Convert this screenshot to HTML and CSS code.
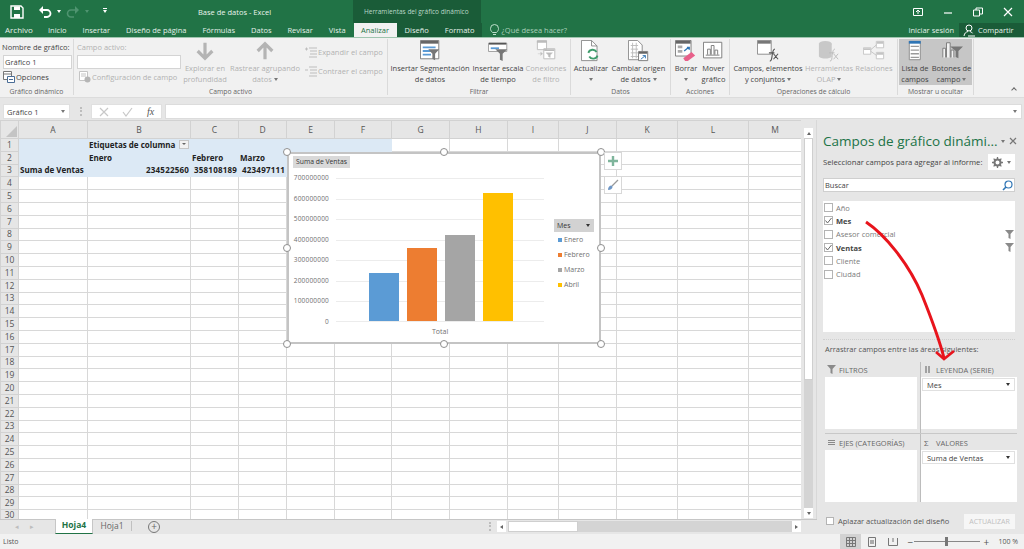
FILE: index.html
```html
<!doctype html>
<html lang="es">
    <head>
        <title>Base de datos - Excel</title>
        <link rel="stylesheet" href="styles.css">
    </head>
    <body>
        <div class="titlebar">
            <div class="qat">
                <svg width="14" height="14" viewBox="0 0 14 14" class="save"><path d="M1 1h10l2 2v10H1z" fill="none" stroke="#fff" stroke-width="1.4"/><path d="M4 1.500h6v3.500H4zM4 9h6v4H4z" fill="#fff"/></svg>
                <svg width="14" height="12" viewBox="0 0 14 12"><path d="M2 4h7a3.500 3.500 0 0 1 0 7H6" fill="none" stroke="#fff" stroke-width="1.800"/><path d="M5 0v8L1 4z" fill="#fff"/></svg>
                <span class="caret"></span>
                <svg width="14" height="12" viewBox="0 0 14 12"><path d="M12 4H5a3.500 3.500 0 0 0 0 7h3" fill="none" stroke="#4f9470" stroke-width="1.600"/><path d="M9 0v8l4-4z" fill="#4f9470"/></svg>
                <span class="caret dim"></span>
                <span class="caret lined"></span>
            </div>
            <div class="doc-title">Base de datos - Excel</div>
            <div class="tools-title">Herramientas del gráfico dinámico</div>
            <div class="win-buttons">
                <svg width="10" height="10" viewBox="0 0 10 10"><path d="M.5 1.500h9v7h-9z" fill="none" stroke="#fff"/><path d="M5 7V3M3 5l2-2 2 2" fill="none" stroke="#fff"/></svg>
                <svg width="10" height="10" viewBox="0 0 10 10"><path d="M1 6h8" stroke="#fff" stroke-width="1.200"/></svg>
                <svg width="10" height="10" viewBox="0 0 10 10"><path d="M.5 3h6v6h-6zM3 3V1h6.500v6H6.500" fill="none" stroke="#fff"/></svg>
                <svg width="10" height="10" viewBox="0 0 10 10"><path d="M1 1l8 8M9 1l-8 8" stroke="#fff" stroke-width="1.200"/></svg>
            </div>
        </div>

        <div class="tabs">
            <span class="tab first">Archivo</span>
            <span class="tab">Inicio</span>
            <span class="tab">Insertar</span>
            <span class="tab">Diseño de página</span>
            <span class="tab">Fórmulas</span>
            <span class="tab">Datos</span>
            <span class="tab">Revisar</span>
            <span class="tab">Vista</span>
            <span class="tab active">Analizar</span>
            <div class="tools-tabs">
                <span class="tab">Diseño</span>
                <span class="tab">Formato</span>
            </div>
            <span class="tell">
                <svg width="9" height="12" viewBox="0 0 9 12"><path d="M2.500 8.500C1 7 .5 6 .5 4.500a4 4 0 0 1 8 0c0 1.500-.5 2.500-2 4zM3 10.500h3" fill="none" stroke="#bfe0cd"/></svg>
                ¿Qué desea hacer?
            </span>
            <span class="login">Iniciar sesión</span>
            <span class="share">
                <svg width="13" height="13" viewBox="0 0 13 13"><circle cx="6" cy="4" r="3" fill="none" stroke="#fff"/><path d="M1 12c.5-3 2-4 4-4.500M7 7.500c1 .2 2 .8 2.500 1.800M5 12h7" fill="none" stroke="#fff"/></svg>
                Compartir
            </span>
        </div>

        <div class="ribbon">
            <div class="group g-name">
                <div class="group-body column">
                    <span class="small-label">Nombre de gráfico:</span>
                    <span class="name-box">Gráfico 1</span>
                    <span class="small-btn">
                        <svg width="12" height="12" viewBox="0 0 12 12"><path d="M.5.500h8v8h-8z" fill="#fff" stroke="#777"/><path d="M.5 3h8" stroke="#777"/><path d="M4.500 5.500h7v6h-7z" fill="#fff" stroke="#4a6d96"/><path d="M6 8.500h4" stroke="#4a6d96"/></svg>
                        Opciones
                    </span>
                </div>
                <div class="group-label">Gráfico dinámico</div>
            </div>

            <div class="group g-active">
                <div class="group-body">
                    <div class="column field-col">
                        <span class="small-label off">Campo activo:</span>
                        <span class="name-box wide"></span>
                        <span class="small-btn off">
                            <svg width="12" height="12" viewBox="0 0 12 12"><path d="M.5.500h8v9h-8z" fill="#fff" stroke="#c4c4c4"/><path d="M2 3h5M2 5h5" stroke="#c4c4c4"/><circle cx="8.500" cy="8.500" r="3" fill="#b5b5b5"/></svg>
                            Configuración de campo
                        </span>
                    </div>
                    <div class="big-btn off b-drill">
                        <svg width="24" height="24" viewBox="0 0 24 24"><path d="M12 3v17M4 12l8 8 8-8" fill="none" stroke="#b4b4b4" stroke-width="3.500"/></svg>
                        <span>Explorar en<br>profundidad</span>
                    </div>
                    <div class="big-btn off b-up">
                        <svg width="24" height="24" viewBox="0 0 24 24"><path d="M12 21V4M4 12l8-8 8 8" fill="none" stroke="#b4b4b4" stroke-width="3.500"/></svg>
                        <span>Rastrear agrupando<br>datos <b class="caret soft"></b></span>
                    </div>
                    <div class="column expand-col">
                        <span class="small-btn off">
                            <svg width="12" height="12" viewBox="0 0 12 12"><path d="M4 2h8M5 5h7M5 8h7M4 11h8M0 3h3M1.500 1.500v3" stroke="#bdbdbd"/></svg>
                            Expandir el campo
                        </span>
                        <span class="small-btn off">
                            <svg width="12" height="12" viewBox="0 0 12 12"><path d="M4 2h8M5 5h7M5 8h7M4 11h8M0 5h3" stroke="#bdbdbd"/></svg>
                            Contraer el campo
                        </span>
                    </div>
                </div>
                <div class="group-label">Campo activo</div>
            </div>

            <div class="group g-filter">
                <div class="group-body">
                    <div class="big-btn b-slicer">
                        <svg width="22" height="24" viewBox="0 0 22 24"><path d="M.5.500h20v20H.5z" fill="#fff" stroke="#777"/><path d="M1 1h19v3H1z" fill="#666"/><path d="M3 7h14v2H3zM3 11h9v2H3zM3 15h9v2H3z" fill="#5b9bd5"/><path d="M9 10h12l-4.500 5v7l-3-1.500V15z" fill="#777"/></svg>
                        <span>Insertar Segmentación<br>de datos</span>
                    </div>
                    <div class="big-btn b-time">
                        <svg width="22" height="24" viewBox="0 0 22 24"><path d="M.5 3.500h20v9H.5z" fill="#fff" stroke="#999"/><path d="M1 3h19v2H1z" fill="#555"/><path d="M3 8h9v2H3z" fill="#5b9bd5"/><path d="M8 10h13l-5 5v8l-3-1.500V15z" fill="#777"/></svg>
                        <span>Insertar escala<br>de tiempo</span>
                    </div>
                    <div class="big-btn off b-conn">
                        <svg width="22" height="24" viewBox="0 0 22 24"><path d="M1.500.500h10v10h-10zM8.500 9.500h12v11h-12z" fill="#fff" stroke="#bbb"/><path d="M9 10h11v2H9zM1 1h11v2H1z" fill="#bbb"/><path d="M11 14h7l-2.500 2.500V19L13.500 18v-1.500zM2 15h5M5 13l2 2-2 2" fill="#bbb" stroke="#bbb" stroke-width=".5"/></svg>
                        <span>Conexiones<br>de filtro</span>
                    </div>
                </div>
                <div class="group-label">Filtrar</div>
            </div>

            <div class="group g-data">
                <div class="group-body">
                    <div class="big-btn b-refresh">
                        <svg width="22" height="24" viewBox="0 0 22 24"><path d="M.5.500h11l6 6v16H.5z" fill="#fff" stroke="#888"/><path d="M11.500.500v6h6" fill="none" stroke="#888"/><path d="M8 14a5 5 0 0 1 9-1M18 17a5 5 0 0 1-9 1" fill="none" stroke="#3f9c6c" stroke-width="2"/></svg>
                        <span>Actualizar<br><b class="caret soft"></b></span>
                    </div>
                    <div class="big-btn b-source">
                        <svg width="22" height="24" viewBox="0 0 22 24"><path d="M.5.500h10l5 5v16H.5z" fill="#fff" stroke="#888"/><path d="M3 6h8M3 10h8M3 14h8M3 18h8M5 3v17M9 3v17" stroke="#bbb"/><path d="M11.500 12.500h10v10h-10z" fill="#fff" stroke="#777"/><path d="M12 13h9v2H12z" fill="#666"/><path d="M14 21l5-4M16 17h3v3" fill="none" stroke="#2f75b5"/></svg>
                        <span>Cambiar origen<br>de datos <b class="caret soft"></b></span>
                    </div>
                </div>
                <div class="group-label">Datos</div>
            </div>

            <div class="group g-actions">
                <div class="group-body">
                    <div class="big-btn b-clear">
                        <svg width="24" height="24" viewBox="0 0 24 24"><path d="M.5.500h17v17H.5z" fill="#fff" stroke="#777"/><path d="M1 1h16v3H1z" fill="#666"/><path d="M3 6h5v3H3zM3 11h5v3H3z" fill="#aaa"/><path d="M10 12l5-4M13 8h2.500v2.500" fill="none" stroke="#2f75b5" stroke-width="1.500"/><path d="M9 20l9-7 4 4-8 6h-3z" fill="#e8608a"/></svg>
                        <span>Borrar<br><b class="caret soft"></b></span>
                    </div>
                    <div class="big-btn b-move">
                        <svg width="24" height="24" viewBox="0 0 24 24"><path d="M.5 2.500h20v17H.5z" fill="#fff" stroke="#777"/><path d="M5 16V10h3v6M9 16V6h3v10M13 16v-5h3v5M3 16.500h15" fill="none" stroke="#777"/></svg>
                        <span>Mover<br>gráfico</span>
                    </div>
                </div>
                <div class="group-label">Acciones</div>
            </div>

            <div class="group g-calc">
                <div class="group-body">
                    <div class="big-btn b-sets">
                        <svg width="24" height="24" viewBox="0 0 24 24"><path d="M.5.500h15v15H.5z" fill="#fff" stroke="#888"/><path d="M1 1h14v3H1z" fill="#777"/><path d="M14 23c2 0 2-2 2.500-6s1-7 3-7M13 14h6M18 15l5 6M23 15l-5 6" fill="none" stroke="#555" stroke-width="1.200"/></svg>
                        <span>Campos, elementos<br>y conjuntos <b class="caret soft"></b></span>
                    </div>
                    <div class="big-btn off b-olap">
                        <svg width="24" height="24" viewBox="0 0 24 24"><ellipse cx="8" cy="4" rx="7" ry="3" fill="#c8c8c8"/><path d="M1 4v14c2 3 12 3 14 0V4z" fill="#c8c8c8"/><path d="M13 23c2 0 2-2 2.500-6s1-7 3-7M12 14h6M17 15l5 6M22 15l-5 6" fill="none" stroke="#bbb"/></svg>
                        <span>Herramientas<br>OLAP <b class="caret soft"></b></span>
                    </div>
                    <div class="big-btn off b-rel">
                        <svg width="24" height="24" viewBox="0 0 24 24"><path d="M.5 8.500h8v7h-8zM14.500 1.500h8v7h-8zM14.500 13.500h8v7h-8z" fill="#fff" stroke="#c4c4c4"/><path d="M1 9h7v2H1zM15 2h7v2h-7zM15 14h7v2h-7z" fill="#c4c4c4"/><path d="M8 11l7-6M8 12l7 5" stroke="#c4c4c4"/></svg>
                        <span>Relaciones</span>
                    </div>
                </div>
                <div class="group-label">Operaciones de cálculo</div>
            </div>

            <div class="group g-show">
                <div class="group-body">
                    <div class="big-btn pressed b-list">
                        <svg width="18" height="24" viewBox="0 0 18 24"><path d="M2.500 1.500h12v20h-12z" fill="#fff" stroke="#888"/><path d="M2 1h13v3H2z" fill="#2f75b5"/><path d="M4 7h9M4 11h9M4 15h9M4 19h9" stroke="#9a9a9a" stroke-width="1.500"/></svg>
                        <span>Lista de<br>campos</span>
                    </div>
                    <div class="big-btn pressed b-buttons">
                        <svg width="24" height="24" viewBox="0 0 24 24"><path d="M2 19V9h3v10M6 19V3h4v16M11 19v-8h3v8" fill="#f2f2f2" stroke="#777"/><path d="M10 7h14l-5 5v8l-3-1.500V12z" fill="#777"/></svg>
                        <span>Botones de<br>campo <b class="caret soft"></b></span>
                    </div>
                </div>
                <div class="group-label">Mostrar u ocultar</div>
            </div>
            <span class="collapse"></span>
        </div>

        <div class="formula-bar">
            <div class="name-field">Gráfico 1<span class="caret soft"></span></div>
            <span class="grip"></span>
            <div class="fx-box">
                <svg width="10" height="10" viewBox="0 0 10 10"><path d="M1 1l8 8M9 1l-8 8" stroke="#c8c8c8" stroke-width="1.200"/></svg>
                <svg width="11" height="10" viewBox="0 0 11 10"><path d="M1 5l3 4 6-8" fill="none" stroke="#c8c8c8" stroke-width="1.200"/></svg>
                <i>fx</i>
            </div>
            <div class="formula-input"><span class="caret soft"></span></div>
        </div>

        <div class="main">
            <div class="sheet-area">
                <div class="sheet-row">
                    <div class="grid-wrap">
                        <table class="grid">
                            <colgroup>
                                <col class="c0"><col class="c-a"><col class="c-b"><col class="c-c"><col class="c-d"><col class="c-e"><col class="c-f"><col class="c-g"><col class="c-h"><col class="c-i"><col class="c-j"><col class="c-k"><col class="c-l"><col class="c-m">
                            </colgroup>
                            <thead>
                                <tr>
                                    <th class="corner"><span class="corner-mark"></span></th>
                                    <th>A</th><th>B</th><th>C</th><th>D</th><th>E</th><th>F</th><th>G</th><th>H</th><th>I</th><th>J</th><th>K</th><th>L</th><th>M</th>
                                </tr>
                            </thead>
                            <tbody>
                                <tr><th>1</th><td class="pv"></td><td class="pv b">Etiquetas de columna<span class="filter-btn"></span></td><td class="pv"></td><td class="pv"></td><td class="pv"></td><td class="pv"></td><td></td><td></td><td></td><td></td><td></td><td></td><td></td></tr>
                                <tr><th>2</th><td class="pv"></td><td class="pv b">Enero</td><td class="pv b">Febrero</td><td class="pv b">Marzo</td><td class="pv"></td><td class="pv"></td><td></td><td></td><td></td><td></td><td></td><td></td><td></td></tr>
                                <tr><th>3</th><td class="pv b">Suma de Ventas</td><td class="pv b num">234522560</td><td class="pv b num">358108189</td><td class="pv b num">423497111</td><td class="pv"></td><td class="pv"></td><td></td><td></td><td></td><td></td><td></td><td></td><td></td></tr>
                                <tr><th>4</th><td></td><td></td><td></td><td></td><td></td><td></td><td></td><td></td><td></td><td></td><td></td><td></td><td></td></tr>
                                <tr><th>5</th><td></td><td></td><td></td><td></td><td></td><td></td><td></td><td></td><td></td><td></td><td></td><td></td><td></td></tr>
                                <tr><th>6</th><td></td><td></td><td></td><td></td><td></td><td></td><td></td><td></td><td></td><td></td><td></td><td></td><td></td></tr>
                                <tr><th>7</th><td></td><td></td><td></td><td></td><td></td><td></td><td></td><td></td><td></td><td></td><td></td><td></td><td></td></tr>
                                <tr><th>8</th><td></td><td></td><td></td><td></td><td></td><td></td><td></td><td></td><td></td><td></td><td></td><td></td><td></td></tr>
                                <tr><th>9</th><td></td><td></td><td></td><td></td><td></td><td></td><td></td><td></td><td></td><td></td><td></td><td></td><td></td></tr>
                                <tr><th>10</th><td></td><td></td><td></td><td></td><td></td><td></td><td></td><td></td><td></td><td></td><td></td><td></td><td></td></tr>
                                <tr><th>11</th><td></td><td></td><td></td><td></td><td></td><td></td><td></td><td></td><td></td><td></td><td></td><td></td><td></td></tr>
                                <tr><th>12</th><td></td><td></td><td></td><td></td><td></td><td></td><td></td><td></td><td></td><td></td><td></td><td></td><td></td></tr>
                                <tr><th>13</th><td></td><td></td><td></td><td></td><td></td><td></td><td></td><td></td><td></td><td></td><td></td><td></td><td></td></tr>
                                <tr><th>14</th><td></td><td></td><td></td><td></td><td></td><td></td><td></td><td></td><td></td><td></td><td></td><td></td><td></td></tr>
                                <tr><th>15</th><td></td><td></td><td></td><td></td><td></td><td></td><td></td><td></td><td></td><td></td><td></td><td></td><td></td></tr>
                                <tr><th>16</th><td></td><td></td><td></td><td></td><td></td><td></td><td></td><td></td><td></td><td></td><td></td><td></td><td></td></tr>
                                <tr><th>17</th><td></td><td></td><td></td><td></td><td></td><td></td><td></td><td></td><td></td><td></td><td></td><td></td><td></td></tr>
                                <tr><th>18</th><td></td><td></td><td></td><td></td><td></td><td></td><td></td><td></td><td></td><td></td><td></td><td></td><td></td></tr>
                                <tr><th>19</th><td></td><td></td><td></td><td></td><td></td><td></td><td></td><td></td><td></td><td></td><td></td><td></td><td></td></tr>
                                <tr><th>20</th><td></td><td></td><td></td><td></td><td></td><td></td><td></td><td></td><td></td><td></td><td></td><td></td><td></td></tr>
                                <tr><th>21</th><td></td><td></td><td></td><td></td><td></td><td></td><td></td><td></td><td></td><td></td><td></td><td></td><td></td></tr>
                                <tr><th>22</th><td></td><td></td><td></td><td></td><td></td><td></td><td></td><td></td><td></td><td></td><td></td><td></td><td></td></tr>
                                <tr><th>23</th><td></td><td></td><td></td><td></td><td></td><td></td><td></td><td></td><td></td><td></td><td></td><td></td><td></td></tr>
                                <tr><th>24</th><td></td><td></td><td></td><td></td><td></td><td></td><td></td><td></td><td></td><td></td><td></td><td></td><td></td></tr>
                                <tr><th>25</th><td></td><td></td><td></td><td></td><td></td><td></td><td></td><td></td><td></td><td></td><td></td><td></td><td></td></tr>
                                <tr><th>26</th><td></td><td></td><td></td><td></td><td></td><td></td><td></td><td></td><td></td><td></td><td></td><td></td><td></td></tr>
                                <tr><th>27</th><td></td><td></td><td></td><td></td><td></td><td></td><td></td><td></td><td></td><td></td><td></td><td></td><td></td></tr>
                                <tr><th>28</th><td></td><td></td><td></td><td></td><td></td><td></td><td></td><td></td><td></td><td></td><td></td><td></td><td></td></tr>
                                <tr><th>29</th><td></td><td></td><td></td><td></td><td></td><td></td><td></td><td></td><td></td><td></td><td></td><td></td><td></td></tr>
                                <tr class="last-row"><th>30</th><td></td><td></td><td></td><td></td><td></td><td></td><td></td><td></td><td></td><td></td><td></td><td></td><td></td></tr>
                            </tbody>
                        </table>

                        <!-- chart floats over the cells -->
                        <div class="chart">
                            <span class="handle h-tl"></span><span class="handle h-tc"></span><span class="handle h-tr"></span>
                            <span class="handle h-ml"></span><span class="handle h-mr"></span>
                            <span class="handle h-bl"></span><span class="handle h-bc"></span><span class="handle h-br"></span>
                            <div class="chart-field">Suma de Ventas</div>
                            <div class="plot">
                                <div class="y-axis">
                                    <span>700000000</span><span>600000000</span><span>500000000</span><span>400000000</span><span>300000000</span><span>200000000</span><span>100000000</span><span>0</span>
                                </div>
                                <div class="plot-area">
                                    <div class="bars">
                                        <div class="bar s-blue" style="height: 33.5%"></div>
                                        <div class="bar s-orange" style="height: 51.2%"></div>
                                        <div class="bar s-gray" style="height: 60.5%"></div>
                                        <div class="bar s-yellow" style="height: 89.6%"></div>
                                    </div>
                                </div>
                            </div>
                            <div class="x-label">Total</div>
                            <div class="legend">
                                <div class="legend-btn">Mes<span class="caret dark"></span></div>
                                <div class="legend-item"><i class="s-blue"></i>Enero</div>
                                <div class="legend-item"><i class="s-orange"></i>Febrero</div>
                                <div class="legend-item"><i class="s-gray"></i>Marzo</div>
                                <div class="legend-item"><i class="s-yellow"></i>Abril</div>
                            </div>
                        </div>
                        <div class="chart-tool t-plus">
                            <svg width="10" height="10" viewBox="0 0 10 10"><path d="M5 0v10M0 5h10" stroke="#7fb59c" stroke-width="2.400"/></svg>
                        </div>
                        <div class="chart-tool t-brush">
                            <svg width="12" height="12" viewBox="0 0 12 12"><path d="M11 1L5 7" stroke="#999" stroke-width="1.200"/><path d="M1 11c0-3 1.500-4.500 3.500-4.500l1 1C5.500 9.500 4 11 1 11z" fill="#6f97c6"/></svg>
                        </div>
                    </div>
                    <div class="v-scroll">
                        <span class="arrow-box"><span class="arrow up"></span></span>
                        <span class="thumb"></span>
                        <span class="track"></span>
                        <span class="arrow-box"><span class="arrow down"></span></span>
                    </div>
                </div>
                <div class="sheet-tabs">
                    <span class="nav">◂</span><span class="nav">▸</span>
                    <span class="sheet active">Hoja4</span>
                    <span class="sheet">Hoja1</span>
                    <span class="tab-sep"></span>
                    <span class="add-sheet">+</span>
                    <div class="h-scroll">
                        <span class="grip"></span>
                        <span class="h-arrow"><span class="arrow left"></span></span>
                        <span class="h-thumb"></span>
                        <span class="h-track"></span>
                        <span class="h-arrow"><span class="arrow right"></span></span>
                    </div>
                </div>
            </div>

            <aside class="panel">
                <div class="panel-head">
                    <span class="panel-title">Campos de gráfico dinámi...</span>
                    <span class="caret soft"></span>
                    <svg width="8" height="8" viewBox="0 0 8 8"><path d="M1 1l6 6M7 1L1 7" stroke="#777" stroke-width="1.200"/></svg>
                </div>
                <div class="panel-sub">
                    <span>Seleccionar campos para agregar al informe:</span>
                    <span class="gear">
                        <svg width="11" height="11" viewBox="0 0 11 11"><circle cx="5.500" cy="5.500" r="3" fill="none" stroke="#777" stroke-width="2"/><path d="M5.500 0v2M5.500 9v2M0 5.500h2M9 5.500h2M1.600 1.600l1.400 1.400M8 8l1.400 1.400M9.400 1.600L8 3M3 8L1.600 9.400" stroke="#777" stroke-width="1.300"/></svg>
                        <span class="caret soft"></span>
                    </span>
                </div>
                <div class="search">
                    Buscar
                    <svg width="11" height="11" viewBox="0 0 11 11"><circle cx="6.500" cy="4.500" r="3.500" fill="none" stroke="#2f75b5" stroke-width="1.200"/><path d="M4 7L1 10" stroke="#2f75b5" stroke-width="1.600"/></svg>
                </div>
                <div class="field-list">
                    <div class="field"><span class="check"></span>Año</div>
                    <div class="field on"><span class="check"><svg width="9" height="9" viewBox="0 0 9 9"><path d="M1.500 4.500l2 2.500 4-5" fill="none" stroke="#666"/></svg></span>Mes</div>
                    <div class="field"><span class="check"></span>Asesor comercial<svg class="funnel" width="9" height="9" viewBox="0 0 9 9"><path d="M0 0h9L5.500 4v5L3.500 8V4z" fill="#8a8a8a"/></svg></div>
                    <div class="field on"><span class="check"><svg width="9" height="9" viewBox="0 0 9 9"><path d="M1.500 4.500l2 2.500 4-5" fill="none" stroke="#666"/></svg></span>Ventas<svg class="funnel" width="9" height="9" viewBox="0 0 9 9"><path d="M0 0h9L5.500 4v5L3.500 8V4z" fill="#8a8a8a"/></svg></div>
                    <div class="field"><span class="check"></span>Cliente</div>
                    <div class="field"><span class="check"></span>Ciudad</div>
                </div>
                <div class="drag-note">Arrastrar campos entre las áreas siguientes:</div>
                <div class="areas">
                    <div class="area">
                        <div class="area-head"><svg width="9" height="9" viewBox="0 0 9 9"><path d="M0 0h9L5.500 4v5L3.500 8V4z" fill="#8a8a8a"/></svg>FILTROS</div>
                        <div class="area-box"></div>
                    </div>
                    <div class="area right">
                        <div class="area-head"><svg width="9" height="9" viewBox="0 0 9 9"><path d="M2 1v7M5 1v7" stroke="#8a8a8a" stroke-width="1.500"/></svg>LEYENDA (SERIE)</div>
                        <div class="area-box"><div class="pill">Mes<span class="caret dark"></span></div></div>
                    </div>
                    <div class="area-sep"></div>
                    <div class="area lower">
                        <div class="area-head"><svg width="9" height="9" viewBox="0 0 9 9"><path d="M1 2.500h7M1 4.500h7M1 6.500h7" stroke="#8a8a8a" stroke-width="1.200"/></svg>EJES (CATEGORÍAS)</div>
                        <div class="area-box"></div>
                    </div>
                    <div class="area right lower">
                        <div class="area-head"><span class="sigma">Σ</span>VALORES</div>
                        <div class="area-box"><div class="pill">Suma de Ventas<span class="caret dark"></span></div></div>
                    </div>
                </div>
                <div class="panel-foot">
                    <span class="check"></span>
                    <span class="defer">Aplazar actualización del diseño</span>
                    <span class="update">ACTUALIZAR</span>
                </div>
                <!-- hand drawn arrow on top of the panel -->
                <svg class="red-arrow" width="95" height="145" viewBox="0 0 95 145">
                    <path d="M4 2C22 14 46 42 60 75C70 100 77 118 82 138" fill="none" stroke="#e8141c" stroke-width="3"/>
                    <path d="M74 132L82 139L92 131" fill="none" stroke="#e8141c" stroke-width="2.600"/>
                </svg>
            </aside>
        </div>

        <div class="statusbar">
            <span>Listo</span>
            <div class="status-right">
                <span class="view active"><svg width="10" height="10" viewBox="0 0 10 10"><path d="M.5.500h9v9h-9zM.5 3.500h9M.5 6.500h9M3.500.5v9M6.500.5v9" fill="none" stroke="#777"/></svg></span>
                <span class="view"><svg width="10" height="10" viewBox="0 0 10 10"><path d="M1.500.500h7v9h-7z" fill="none" stroke="#777"/><path d="M3 3h4v4H3z" fill="#aaa"/></svg></span>
                <span class="view"><svg width="10" height="10" viewBox="0 0 10 10"><path d="M.5 1v7.500h9V1M5 1v4" fill="none" stroke="#777"/></svg></span>
                <span class="zoom-btn minus">−</span>
                <span class="slider"><i></i></span>
                <span class="zoom-btn">+</span>
                <span class="zoom-val">100 %</span>
            </div>
        </div>
    </body>
</html>
```

FILE: styles.css
```css
* {
    box-sizing: border-box;
}
html,
body {
    margin: 0;
    height: 549px;
    overflow: hidden;
}
body {
    width: 1024px;
    font-family: "Open Sans", "Liberation Sans", sans-serif;
    font-size: 7.5px;
    color: #444;
    background: #e6e6e6;
    display: flex;
    flex-direction: column;
}
svg {
    flex: none;
    display: block;
}

/* small triangles used all over */
.caret {
    display: inline-block;
    width: 0;
    height: 0;
    border-left: 2.5px solid transparent;
    border-right: 2.5px solid transparent;
    border-top: 3px solid #fff;
}
.caret.dim {
    border-top-color: #4f9470;
}
.caret.lined {
    margin-left: 9px;
    position: relative;
}
.caret.lined::before {
    content: "";
    position: absolute;
    left: -2px;
    top: -5px;
    width: 4px;
    height: 1px;
    background: #fff;
}
.caret.soft {
    border-top-color: #777;
    vertical-align: 1px;
}
.caret.dark {
    border-top-color: #333;
}

/* title bar */
.titlebar {
    height: 23px;
    flex: none;
    background: #217346;
    color: #fff;
    display: flex;
    align-items: center;
}
.qat {
    width: 198px;
    padding-left: 10px;
    display: flex;
    align-items: center;
    gap: 5px;
}
.qat .save {
    margin-right: 9px;
}
.doc-title {
    width: 155px;
    color: #e9f3ed;
    font-size: 7.5px;
}
.tools-title {
    width: 128px;
    height: 23px;
    padding-left: 11px;
    line-height: 23px;
    font-size: 6.5px;
    background: #1a5c38;
    color: #bcd9c8;
    white-space: nowrap;
}
.win-buttons {
    margin-left: auto;
    display: flex;
    gap: 20px;
    padding-right: 11px;
}

/* tabs */
.tabs {
    height: 14px;
    flex: none;
    background: #217346;
    color: #e4f0e9;
    display: flex;
    align-items: center;
    font-size: 7.5px;
}
.tab {
    padding: 0 8px;
    line-height: 14px;
    white-space: nowrap;
}
.tab.first {
    width: 40px;
    padding: 0 0 0 5px;
    font-size: 8px;
}
.tab.active {
    width: 43px;
    padding: 0;
    text-align: center;
    background: #f1f1f1;
    color: #217346;
    height: 15px;
    line-height: 15px;
    align-self: flex-start;
}
.tools-tabs {
    display: flex;
    background: #1a5c38;
    height: 14px;
    width: 85px;
}
.tell {
    display: flex;
    align-items: center;
    gap: 3px;
    margin-left: 8px;
    color: #a9cfb9;
}
.login {
    margin-left: auto;
    margin-right: 5px;
}
.share {
    width: 65px;
    height: 14px;
    background: #1a5c38;
    display: flex;
    align-items: center;
    gap: 2px;
    padding-left: 4px;
}

/* ribbon */
.ribbon {
    height: 60px;
    flex: none;
    background: #f1f1f1;
    border-top: 1px solid #9fc5af;
    display: flex;
    position: relative;
    margin-bottom: 6px;
    box-shadow: 0 1px 0 #dcdcdc;
}
.group {
    display: flex;
    flex-direction: column;
    border-right: 1px solid #dadada;
    flex: none;
    height: 56px;
    margin-top: 1px;
}
.group-body {
    height: 46px;
    display: flex;
}
.group-label {
    margin-top: 2px;
    text-align: center;
    font-size: 6.8px;
    line-height: 9px;
    color: #666;
}
.column {
    display: flex;
    flex-direction: column;
}
.g-name {
    width: 74px;
}
.g-name .group-body {
    padding: 2px 0 0 3px;
}
.g-active {
    width: 314px;
}
.g-filter {
    width: 183px;
}
.g-filter .group-body {
    padding-left: 1px;
}
.g-data {
    width: 100px;
}
.g-actions {
    width: 59px;
}
.g-calc {
    width: 168px;
}
.g-show {
    width: 76px;
}
.g-show .group-body {
    padding-left: 1px;
}
.small-label {
    margin-left: -1px;
    line-height: 13px;
    white-space: nowrap;
}
.off {
    color: #b1b1b1;
}
.name-box {
    width: 69px;
    height: 14px;
    margin-top: 1px;
    background: #fff;
    border: 1px solid #d4d4d4;
    line-height: 12px;
    padding-left: 1px;
    color: #444;
}
.name-box.wide {
    width: 104px;
}
.small-btn {
    display: flex;
    align-items: center;
    gap: 1px;
    height: 16px;
    white-space: nowrap;
}
.field-col {
    width: 106px;
    padding: 2px 0 0 3px;
}
.field-col .small-label {
    margin-left: 0;
}
.field-col .small-btn {
    padding-left: 2px;
}
.big-btn {
    display: flex;
    flex-direction: column;
    align-items: center;
    text-align: center;
    line-height: 11px;
    padding-top: 1px;
    flex: none;
    white-space: nowrap;
}
.big-btn svg {
    height: 22px;
    width: auto;
}
.big-btn span {
    display: block;
    margin-top: 1px;
}
.big-btn.pressed {
    background: #c6c6c6;
}
.b-drill { width: 50px; }
.b-up { width: 70px; }
.expand-col {
    padding: 5px 0 0 5px;
    gap: 3px;
}
.b-slicer { width: 82px; }
.b-time { width: 54px; }
.b-conn { width: 42px; }
.b-refresh { width: 40px; }
.b-source { width: 55px; }
.b-clear { width: 30px; }
.b-move { width: 25px; }
.b-sets { width: 76px; }
.b-olap { width: 46px; }
.b-rel { width: 44px; }
.b-list { width: 32px; }
.b-buttons { width: 41px; }
.collapse {
    position: absolute;
    right: 8px;
    bottom: 5px;
    width: 4px;
    height: 4px;
    border-left: 1px solid #666;
    border-top: 1px solid #666;
    transform: rotate(45deg);
}

/* formula bar */
.formula-bar {
    height: 17px;
    flex: none;
    display: flex;
    align-items: stretch;
    padding: 1px 2px 1px 3px;
}
.name-field {
    width: 67px;
    background: #fff;
    padding: 0 4px 0 3px;
    display: flex;
    align-items: center;
    justify-content: space-between;
    border: 1px solid #e0e0e0;
}
.grip {
    width: 21px;
    display: flex;
    align-items: center;
    justify-content: center;
    flex: none;
}
.grip::after {
    content: "";
    height: 9px;
    border-left: 2px dotted #bdbdbd;
}
.fx-box {
    width: 71px;
    background: #fff;
    display: flex;
    align-items: center;
    justify-content: space-around;
    border: 1px solid #e0e0e0;
    color: #555;
}
.fx-box i {
    font-family: "Liberation Serif", serif;
    font-size: 10px;
}
.formula-input {
    flex: 1;
    margin-left: 3px;
    background: #fff;
    border: 1px solid #dcdcdc;
    display: flex;
    align-items: center;
    justify-content: flex-end;
    padding-right: 4px;
}

/* main */
.main {
    flex: 1;
    display: flex;
    min-height: 0;
}
.sheet-area {
    width: 817px;
    display: flex;
    flex-direction: column;
}
.sheet-row {
    display: flex;
    height: 399px;
}
.grid-wrap {
    width: 801px;
    position: relative;
    overflow: hidden;
    background: #fff;
}
.grid {
    border-collapse: collapse;
    table-layout: fixed;
    width: 801px;
}
.c0 { width: 18px; }
.c-a { width: 69px; }
.c-b { width: 103px; }
.c-c { width: 48px; }
.c-d { width: 48px; }
.c-e { width: 48px; }
.c-f { width: 57px; }
.c-g { width: 58px; }
.c-h { width: 58px; }
.c-i { width: 51px; }
.c-j { width: 58px; }
.c-k { width: 61px; }
.c-l { width: 71px; }
.c-m { width: 53px; }
.grid tr {
    height: 12.8px;
}
.grid thead tr {
    height: 18px;
}
.grid tr.last-row {
    height: 10px;
}
.grid tr.last-row th {
    vertical-align: top;
}
.grid td {
    border: 1px solid #d8d8d8;
    padding: 0 1px;
    font-size: 8px;
    line-height: 10px;
    color: #222;
    white-space: nowrap;
}
.grid th {
    border: 1px solid #d2d2d2;
    background: #e6e6e6;
    font-weight: 400;
    font-size: 8.5px;
    line-height: 10px;
    padding: 0;
    color: #555;
}
.corner {
    position: relative;
}
.corner-mark {
    position: absolute;
    right: 1px;
    bottom: 1px;
    border-left: 11px solid transparent;
    border-bottom: 11px solid #c4c4c4;
}
.grid td.pv {
    background: #dce9f5;
    border-color: #dce9f5;
}
.grid td.b {
    font-weight: 700;
}
.grid td.num {
    text-align: right;
    letter-spacing: .2px;
}
.filter-btn {
    display: inline-block;
    width: 10px;
    height: 9px;
    margin-left: 4px;
    vertical-align: -1px;
    background: #f2f2f2;
    border: 1px solid #c6c6c6;
    position: relative;
}
.filter-btn::after {
    content: "";
    position: absolute;
    left: 2px;
    top: 2px;
    border-left: 2px solid transparent;
    border-right: 2px solid transparent;
    border-top: 2.5px solid #666;
}

/* chart over the grid */
.chart {
    position: absolute;
    left: 287px;
    top: 32px;
    width: 314px;
    height: 192px;
    background: #fff;
    border: 2px solid #c4c4c4;
    color: #707070;
    font-size: 7px;
}
.handle {
    position: absolute;
    width: 8px;
    height: 8px;
    background: #fff;
    border: 1.5px solid #8f8f8f;
    border-radius: 50%;
}
.h-tl { left: -6px; top: -6px; }
.h-tc { left: 151px; top: -6px; }
.h-tr { right: -6px; top: -6px; }
.h-ml { left: -6px; top: 90px; }
.h-mr { right: -6px; top: 90px; }
.h-bl { left: -6px; bottom: -6px; }
.h-bc { left: 151px; bottom: -6px; }
.h-br { right: -6px; bottom: -6px; }
.chart-field {
    position: absolute;
    left: 4px;
    top: 2px;
    width: 57px;
    height: 12px;
    background: #d9d9d9;
    color: #333;
    font-size: 6.8px;
    line-height: 12px;
    text-align: center;
    white-space: nowrap;
}
.plot {
    position: absolute;
    left: 0;
    top: 20px;
    display: flex;
    height: 152px;
}
.y-axis {
    width: 40px;
    height: 152px;
    display: flex;
    flex-direction: column;
    justify-content: space-between;
    text-align: right;
    line-height: 8px;
    font-size: 6.5px;
    letter-spacing: .2px;
}
.plot-area {
    width: 208px;
    margin-left: 7px;
    margin-top: 4px;
    height: 144px;
    background: repeating-linear-gradient(to bottom, #ececec 0, #ececec 1px, transparent 1px, transparent 20.57px);
    border-bottom: 1px solid #ececec;
}
.bars {
    height: 100%;
    display: flex;
    align-items: flex-end;
    gap: 8px;
    padding-left: 33px;
}
.bar {
    width: 30px;
}
.s-blue { background: #5b9bd5; }
.s-orange { background: #ed7d31; }
.s-gray { background: #a5a5a5; }
.s-yellow { background: #ffc000; }
.x-label {
    position: absolute;
    left: 143px;
    top: 173px;
}
.legend {
    position: absolute;
    left: 265px;
    top: 65px;
    width: 40px;
}
.legend-btn {
    height: 13px;
    background: #d2d2d2;
    color: #333;
    line-height: 13px;
    padding: 0 4px 0 3px;
    display: flex;
    align-items: center;
    justify-content: space-between;
}
.legend-item {
    display: flex;
    align-items: center;
    gap: 2px;
    height: 15px;
    padding-left: 4px;
}
.legend-item i {
    width: 4px;
    height: 4px;
}
.chart-tool {
    position: absolute;
    left: 604px;
    width: 18px;
    height: 18px;
    background: #fff;
    border: 1px solid #d8d8d8;
    display: flex;
    align-items: center;
    justify-content: center;
}
.t-plus {
    top: 32px;
}
.t-brush {
    top: 56px;
}

/* scrollbars and sheet tabs */
.v-scroll {
    width: 16px;
    padding: 8px 3px 0;
    border-right: 1px solid #d8d8d8;
    display: flex;
    flex-direction: column;
}
.arrow-box {
    height: 10px;
    background: #fff;
    display: flex;
    align-items: center;
    justify-content: center;
    flex: none;
}
.thumb {
    height: 242px;
    background: #fff;
    border: 1px solid #cfcfcf;
}
.track {
    height: 128px;
    background: #d4d4d4;
}
.arrow {
    display: block;
    border-left: 2.5px solid transparent;
    border-right: 2.5px solid transparent;
}
.arrow.up {
    border-bottom: 3px solid #666;
}
.arrow.down {
    border-top: 3px solid #666;
}
.arrow.left,
.arrow.right {
    border: 0;
    border-top: 2.5px solid transparent;
    border-bottom: 2.5px solid transparent;
}
.arrow.left {
    border-right: 3px solid #666;
}
.arrow.right {
    border-left: 3px solid #666;
}
.sheet-tabs {
    height: 15px;
    background: #e6e6e6;
    border-top: 1px solid #c6c6c6;
    display: flex;
    align-items: stretch;
    font-size: 8.5px;
    position: relative;
}
.nav {
    width: 15px;
    line-height: 14px;
    color: #bdbdbd;
    text-align: center;
    font-size: 7px;
}
.nav:first-child {
    margin-left: 9px;
}
.sheet {
    width: 38px;
    text-align: center;
    line-height: 12px;
    color: #666;
}
.sheet.active {
    margin-left: 16px;
    margin-top: -1px;
    background: #fff;
    color: #217346;
    font-weight: 700;
    border-bottom: 1px solid #217346;
    border-left: 1px solid #c6c6c6;
    border-right: 1px solid #c6c6c6;
}
.tab-sep {
    width: 1px;
    height: 10px;
    margin: 1px 0 0 0;
    background: #c0c0c0;
}
.add-sheet {
    width: 12px;
    height: 12px;
    margin: 1px 0 0 16px;
    border: 1px solid #777;
    border-radius: 50%;
    text-align: center;
    line-height: 9px;
    font-size: 10px;
    color: #666;
}
.h-scroll {
    position: absolute;
    left: 482px;
    top: 1px;
    width: 319px;
    height: 11px;
    display: flex;
}
.h-scroll .grip {
    width: 15px;
}
.h-arrow {
    width: 9px;
    background: #fff;
    display: flex;
    align-items: center;
    justify-content: center;
    flex: none;
}
.h-thumb {
    margin-left: 2px;
    width: 70px;
    background: #fff;
    border: 1px solid #cfcfcf;
}
.h-track {
    flex: 1;
    background: #d4d4d4;
}

/* field panel */
.panel {
    width: 207px;
    background: #e6e6e6;
    position: relative;
    padding: 0 9px 0 6px;
}
.panel-head {
    height: 22px;
    margin-top: 10px;
    display: flex;
    align-items: center;
    gap: 4px;
}
.panel-title {
    font-size: 13.5px;
    color: #217346;
    width: 174px;
    flex: none;
    white-space: nowrap;
}
.panel-sub {
    display: flex;
    align-items: center;
    justify-content: space-between;
    font-size: 7.7px;
    height: 16px;
    margin-top: 2px;
    white-space: nowrap;
}
.gear {
    width: 27px;
    height: 16px;
    background: #fff;
    display: flex;
    align-items: center;
    justify-content: center;
    gap: 4px;
}
.search {
    height: 14px;
    margin-top: 8px;
    background: #fff;
    border: 1px solid #cfcfcf;
    display: flex;
    align-items: center;
    justify-content: space-between;
    padding: 0 1px;
}
.field-list {
    height: 131px;
    margin-top: 9px;
    background: #fff;
}
.field {
    height: 13.3px;
    display: flex;
    align-items: center;
    gap: 3px;
    color: #7c7c7c;
    padding-left: 1px;
    position: relative;
}
.field.on {
    font-weight: 700;
    color: #444;
}
.check {
    width: 9px;
    height: 9px;
    background: #fff;
    border: 1px solid #b4b4b4;
    flex: none;
}
.check svg {
    margin: -1px;
}
.funnel {
    position: absolute;
    right: 1px;
    top: 2px;
}
.drag-note {
    margin-top: 7px;
    padding: 2px 0 0 2px;
    height: 17px;
    line-height: 14px;
    white-space: nowrap;
    color: #555;
    border-top: 1px dotted #cfcfcf;
}
.areas {
    margin: 6px 0 0 2px;
    display: grid;
    grid-template-columns: 92px 97px;
    grid-template-rows: 71px 1px 68px;
    column-gap: 3px;
}
.area.right {
    border-left: 1px solid #bcbcbc;
}
.area.lower {
    padding-top: 1px;
}
.area-sep {
    grid-column: 1 / 3;
    background: #c8c8c8;
}
.area-head {
    height: 15px;
    display: flex;
    align-items: center;
    gap: 3px;
    padding-left: 2px;
    color: #666;
    white-space: nowrap;
}
.area.right .area-head {
    padding-left: 3px;
}
.sigma {
    width: 9px;
    font-size: 8px;
}
.area-box {
    height: 52px;
    background: #fff;
    padding-top: 1px;
}
.pill {
    height: 13px;
    margin: 0 2px 0 1px;
    background: #fff;
    border: 1px solid #e0e0e0;
    display: flex;
    align-items: center;
    justify-content: space-between;
    padding: 0 4px;
}
.panel-foot {
    height: 16px;
    margin-top: 11px;
    display: flex;
    align-items: center;
    color: #555;
    white-space: nowrap;
}
.panel-foot .check {
    width: 8px;
    height: 8px;
    margin-left: 3px;
}
.defer {
    margin-left: 4px;
}
.update {
    margin-left: auto;
    width: 51px;
    height: 15px;
    line-height: 15px;
    background: #f6f6f6;
    color: #c0c0c0;
    text-align: center;
    font-size: 7px;
}
.red-arrow {
    position: absolute;
    left: 45px;
    top: 100px;
}

/* status bar */
.statusbar {
    height: 15px;
    flex: none;
    background: #f1f1f1;
    display: flex;
    align-items: center;
    justify-content: space-between;
    padding-left: 3px;
    font-size: 7px;
    color: #555;
}
.status-right {
    display: flex;
    align-items: center;
    height: 15px;
}
.view {
    width: 21px;
    height: 15px;
    display: flex;
    align-items: center;
    justify-content: center;
}
.view.active {
    background: #d2d2d2;
}
.zoom-btn {
    font-size: 10px;
    width: 12px;
    text-align: center;
}
.zoom-btn.minus {
    width: 8px;
    margin-left: 3px;
}
.slider {
    width: 66px;
    height: 1px;
    background: #888;
    position: relative;
}
.slider i {
    position: absolute;
    left: 31px;
    top: -4px;
    width: 3px;
    height: 9px;
    background: #777;
}
.zoom-val {
    margin: 0 6px;
}
```
